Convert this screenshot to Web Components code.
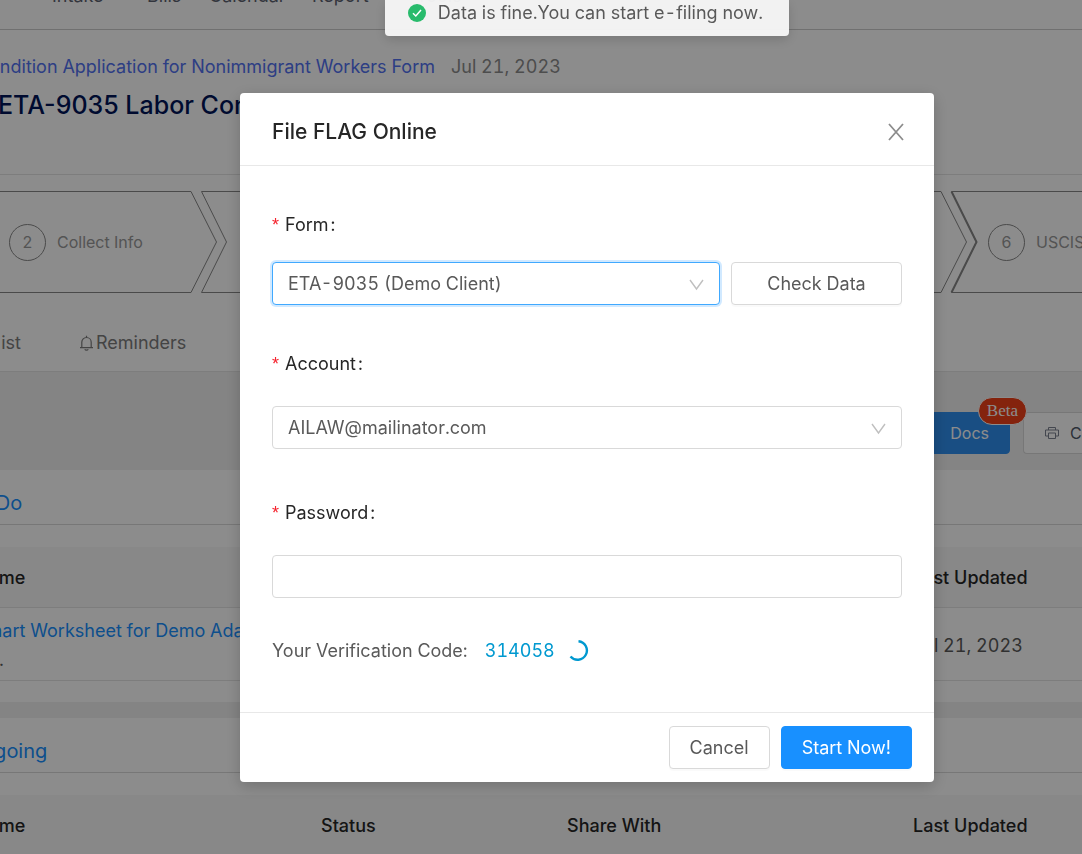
<!DOCTYPE html>
<html lang="en">
<head>
<meta charset="utf-8">
<meta name="viewport" content="width=device-width, initial-scale=1">
<title>File FLAG Online</title>
<style>
  body {
    margin: 0;
    overflow: hidden;
    background: #fff;
    color: #595959;
    font: 18px/28px Inter, "Liberation Sans", sans-serif;
    font-variant-numeric: tabular-nums;
  }
</style>
</head>
<body>
<case-page>
  <case-nav></case-nav>
  <case-header></case-header>
  <case-steps>
    <case-step number="2" style="--inset: 57px">Collect Info</case-step>
    <case-step></case-step>
    <case-step></case-step>
    <case-step></case-step>
    <case-step number="6" current style="--inset: 36px">USCIS</case-step>
  </case-steps>
  <case-tabs></case-tabs>
  <case-actions></case-actions>
  <task-card heading="To Do" filled></task-card>
  <task-card heading="Ongoing"></task-card>
</case-page>
<modal-dialog heading="File FLAG Online">
  <form-field label="Form" type="select" value="ETA-9035 (Demo Client)" active>
    <app-button wide>Check Data</app-button>
  </form-field>
  <form-field label="Account" type="select" value="AILAW@mailinator.com"></form-field>
  <form-field label="Password" type="password"></form-field>
  <verification-code code="314058">Your Verification Code:</verification-code>
  <app-button slot="footer">Cancel</app-button>
  <app-button slot="footer" primary>Start Now!</app-button>
</modal-dialog>
<toast-message>Data is fine.You can start e-filing now.</toast-message>

<script>
const define = (name, markup, setup) => {
    const template = document.createElement('template');
    template.innerHTML = markup;
    customElements.define(name, class extends HTMLElement {
        constructor() {
            super();
            this.attachShadow({ mode: 'open' });
        }

        connectedCallback() {
            if (this.shadowRoot.childElementCount) {
                return;
            }
            this.shadowRoot.appendChild(template.content.cloneNode(true));
            if (setup) {
                setup(this, this.shadowRoot);
            }
        }
    });
};

define('case-page', `
<style>
  :host {
    display: block;
    height: 100vh;
    overflow: hidden;
  }
</style>
<slot></slot>`);

define('case-nav', `
<style>
  :host {
    display: block;
    height: 29px;
    overflow: hidden;
    border-bottom: 1px solid #ccc;
  }
  nav {
    display: grid;
    grid-template-columns: 95px 62px 103px 104px auto;
    margin-top: -18px;
    padding-left: 52px;
  }
  a {
    color: #5c6270;
    text-decoration: none;
  }
</style>
<nav>
  <a href="#">Intake</a>
  <a href="#">Bills</a>
  <a href="#">Calendar</a>
  <a href="#">Report</a>
  <a href="#">Tools</a>
</nav>`);

define('case-header', `
<style>
  :host {
    display: block;
    height: 121px;
    padding-top: 23px;
    border-bottom: 1px solid #e4e4e4;
  }
  .crumbs {
    display: flex;
    gap: 16px;
    color: #8c8c8c;
  }
  .trail {
    display: flex;
    flex: none;
    justify-content: flex-end;
    width: 435px;
    overflow: hidden;
    white-space: nowrap;
  }
  a {
    color: #5271f0;
    text-decoration: none;
  }
  h1 {
    margin: 8px 0 0 -2px;
    color: #001458;
    font-size: 25px;
    font-weight: 500;
    font-variant-numeric: normal;
    line-height: 32px;
    white-space: nowrap;
  }
</style>
<div class="crumbs">
  <div class="trail"><a href="#">ndition Application for Nonimmigrant Workers Form</a></div>
  <span>Jul 21, 2023</span>
</div>
<h1>ETA-9035 Labor Condition</h1>`);

define('case-steps', `
<style>
  :host {
    display: flex;
    margin: 16px 0 0 -48px;
  }
</style>
<slot></slot>`);

define('case-step', `
<style>
  :host {
    position: relative;
    display: flex;
    flex: none;
    align-items: center;
    gap: 11px;
    box-sizing: border-box;
    width: 250px;
    height: 102px;
    padding-left: var(--inset);
    color: #999;
    font-size: 16px;
  }
  svg {
    position: absolute;
    top: 0;
    left: 0;
    overflow: visible;
    fill: none;
    stroke: #888;
  }
  .notch {
    display: none;
  }
  :host([current]) .notch {
    display: inline;
  }
  .number {
    display: flex;
    align-items: center;
    justify-content: center;
    width: 35px;
    height: 35px;
    border: 1px solid #888;
    border-radius: 50%;
  }
</style>
<svg width="266" height="102" aria-hidden="true">
  <path d="M-.5 .5H239L264.500 51L239 101.500H-.5L24.500 51Z"/>
  <path class="notch" stroke-width="2" d="M-.5 .5L24.500 51L-.5 101.500"/>
</svg>
<span class="number"></span>
<slot></slot>`, (host, root) => {
    const number = root.querySelector('.number');
    if (host.hasAttribute('number')) {
        number.textContent = host.getAttribute('number');
    } else {
        number.remove();
    }
});

define('case-tabs', `
<style>
  :host {
    display: flex;
    gap: 58px;
    margin-top: 36px;
    padding-bottom: 14px;
    border-bottom: 1px solid #e4e4e4;
  }
  a {
    display: flex;
    align-items: center;
    color: #7c7c7c;
    text-decoration: none;
  }
  .first {
    justify-content: flex-end;
    width: 21px;
    overflow: hidden;
  }
  svg {
    margin-right: 2px;
    fill: none;
    stroke: currentColor;
  }
</style>
<a class="first" href="#">ist</a>
<a href="#">
  <svg width="15" height="16" viewBox="0 0 15 16" stroke-width="1.2" aria-hidden="true">
    <path d="M1 12.7H14M2.8 12.5V7.2a4.7 4.7 0 0 1 9.4 0V12.5M7.5 2.5V.8M5.8 14.2a1.8 1.4 0 0 0 3.4 0"/>
  </svg>Reminders
</a>`);

define('case-actions', `
<style>
  :host {
    display: flex;
    justify-content: flex-end;
    gap: 13px;
    padding: 40px 0 16px;
    overflow: hidden;
    background: #f0f0f0;
  }
  .docs {
    position: relative;
  }
  button {
    display: flex;
    align-items: center;
    height: 42px;
    box-sizing: border-box;
    padding: 0 20px;
    border: 1px solid #d9d9d9;
    border-radius: 4px;
    background: #fff;
    color: #505868;
    font: inherit;
    font-size: 16px;
  }
  .primary {
    width: 160px;
    justify-content: flex-end;
    border-color: #2f8fef;
    background: #2f8fef;
    color: #fff;
  }
  .print {
    width: 59px;
    gap: 11px;
    padding: 0 0 0 21px;
    border-right: 0;
    border-radius: 4px 0 0 4px;
    overflow: hidden;
  }
  svg {
    flex: none;
    fill: none;
    stroke: #7c8290;
  }
  .beta {
    position: absolute;
    top: -15px;
    right: -17px;
    padding: 0 8px;
    border: 1px solid #fff;
    border-radius: 14px;
    background: #f04018;
    color: #fff;
    font: 17px/26px "Liberation Serif", serif;
  }
</style>
<div class="docs">
  <button class="primary">Docs</button>
  <span class="beta">Beta</span>
</div>
<button class="print">
  <svg width="14" height="14" viewBox="0 0 14 14" aria-hidden="true">
    <path d="M3.5 4V1.500H10.500V4M3.500 10H.5V4H13.500V10H10.500M3.500 7H10.500V12.500H3.500Z"/>
  </svg>C
</button>`);

define('task-card', `
<style>
  :host {
    display: block;
    margin-left: -49px;
    border-bottom: 16px solid #f0f0f0;
    padding-bottom: 21px;
  }
  h2 {
    margin: 0 0 22px;
    padding: 19px 16px 7px;
    border-bottom: 1px solid #d9d9d9;
    color: #1890ff;
    font-size: 20px;
    font-weight: 400;
  }
  table {
    width: 100%;
    border-collapse: collapse;
    table-layout: fixed;
  }
  th, td {
    padding: 9px 24px 5px;
    border-bottom: 1px solid #e4e4e4;
    text-align: left;
    white-space: nowrap;
  }
  th {
    padding: 17px 24px 15px;
    background: #f8f8f8;
    color: #262626;
    font-weight: 500;
  }
  .name { width: 298px; }
  .status { width: 198px; }
  .share { width: 298px; }
  a {
    color: #1890ff;
    text-decoration: none;
  }
  small {
    display: block;
    font-size: 18px;
    line-height: 30px;
  }
</style>
<h2></h2>
<table>
  <thead>
    <tr>
      <th class="name">Name</th>
      <th class="status">Status</th>
      <th class="share">Share With</th>
      <th>Last Updated</th>
    </tr>
  </thead>
  <tbody>
    <tr>
      <td><a href="#">Smart Worksheet for Demo Adam</a><small>Co.</small></td>
      <td></td>
      <td></td>
      <td>Jul 21, 2023</td>
    </tr>
  </tbody>
</table>`, (host, root) => {
    root.querySelector('h2').textContent = host.getAttribute('heading');
    if (!host.hasAttribute('filled')) {
        root.querySelector('tbody').remove();
    }
});

define('modal-dialog', `
<style>
  :host {
    position: fixed;
    inset: 0;
    box-sizing: border-box;
    padding: 93px 148px 24px 240px;
    background: rgba(0, 0, 0, .45);
  }
  section {
    border-radius: 4px;
    background: #fff;
    box-shadow: 0 4px 16px rgba(0, 0, 0, .2);
  }
  header {
    display: flex;
    align-items: center;
    justify-content: space-between;
    box-sizing: border-box;
    height: 73px;
    padding: 5px 29px 0 32px;
    border-bottom: 1px solid #e8e8e8;
  }
  h2 {
    margin: 0;
    color: #262626;
    font-size: 21px;
    font-weight: 500;
  }
  .close {
    display: flex;
    padding: 0;
    border: 0;
    background: none;
    color: #8c8c8c;
  }
  .body {
    padding: 39px 32px 41px;
  }
  footer {
    display: flex;
    justify-content: flex-end;
    gap: 11px;
    padding: 13px 22px;
    border-top: 1px solid #e8e8e8;
  }
</style>
<section role="dialog" aria-labelledby="heading">
  <header>
    <h2 id="heading"></h2>
    <button class="close" aria-label="Close">
      <svg width="18" height="18" viewBox="0 0 18 18" fill="none" stroke="currentColor" stroke-width="1.8">
        <path d="M2 1L16 17M16 1L2 17"/>
      </svg>
    </button>
  </header>
  <div class="body"><slot></slot></div>
  <footer><slot name="footer"></slot></footer>
</section>`, (host, root) => {
    root.querySelector('h2').textContent = host.getAttribute('heading');
});

define('form-field', `
<style>
  :host {
    display: block;
    margin-bottom: 44px;
  }
  :host([active]) {
    margin-bottom: 39px;
  }
  label {
    display: flex;
    align-items: center;
    height: 40px;
    margin-bottom: 22px;
    color: #262626;
  }
  :host([active]) label {
    margin-bottom: 17px;
  }
  label::before {
    content: "*";
    margin-right: 6px;
    color: #f5222d;
    font: 18px/18px "Liberation Sans", sans-serif;
  }
  label::after {
    content: ":";
    margin-left: 2px;
  }
  .row {
    display: flex;
    gap: 11px;
  }
  .control {
    position: relative;
    flex: 1;
  }
  select, input {
    display: block;
    box-sizing: border-box;
    width: 100%;
    height: 43px;
    padding: 0 15px;
    border: 1px solid #d9d9d9;
    border-radius: 4px;
    outline: 0;
    appearance: none;
    background: #fff;
    color: #595959;
    font: inherit;
  }
  :host([active]) select {
    border-color: #40a9ff;
    box-shadow: 0 0 0 2px rgba(24, 144, 255, .2);
  }
  svg {
    position: absolute;
    top: 17px;
    right: 16px;
    pointer-events: none;
  }
</style>
<label for="control"></label>
<div class="row">
  <div class="control"></div>
  <slot></slot>
</div>`, (host, root) => {
    const control = root.querySelector('.control');
    root.querySelector('label').textContent = host.getAttribute('label');
    if (host.getAttribute('type') === 'select') {
        control.innerHTML = `
            <select id="control"><option></option></select>
            <svg width="15" height="12" viewBox="0 0 15 12" fill="none" stroke="#bfbfbf" stroke-width="1.4" aria-hidden="true">
              <path d="M1 1L7.500 10L14 1"/>
            </svg>`;
        root.querySelector('option').textContent = host.getAttribute('value');
    } else {
        control.innerHTML = `<input id="control" type="${host.getAttribute('type')}">`;
    }
});

define('app-button', `
<style>
  :host {
    display: block;
  }
  button {
    box-sizing: border-box;
    width: 100%;
    height: 43px;
    padding: 0 20px;
    border: 1px solid #d9d9d9;
    border-radius: 4px;
    background: #fff;
    box-shadow: 0 2px 0 rgba(0, 0, 0, .02);
    color: #595959;
    font: inherit;
    white-space: nowrap;
  }
  :host([wide]) {
    flex: none;
    width: 171px;
  }
  :host([primary]) button {
    border-color: #1890ff;
    background: #1890ff;
    color: #fff;
  }
</style>
<button><slot></slot></button>`);

define('verification-code', `
<style>
  :host {
    display: flex;
    align-items: center;
    height: 40px;
    margin-top: -11px;
  }
  output {
    margin: 0 14px 0 17px;
    color: #0099d0;
  }
</style>
<slot></slot>
<output></output>
<svg width="20" height="22" viewBox="0 0 20 22" fill="none" stroke="#0099d0" stroke-width="2.400" aria-hidden="true">
  <path d="M9.500 1.200A9.300 9.300 0 1 1 1.500 16.500"/>
</svg>`, (host, root) => {
    root.querySelector('output').textContent = host.getAttribute('code');
});

define('toast-message', `
<style>
  :host {
    position: fixed;
    inset: 0 148px auto 240px;
    display: flex;
    justify-content: center;
  }
  div {
    display: flex;
    align-items: center;
    gap: 12px;
    padding: 0 26px 10px 23px;
    border-radius: 0 0 4px 4px;
    background: rgba(246, 246, 246, .96);
    box-shadow: 0 4px 12px rgba(0, 0, 0, .15);
    line-height: 26px;
    white-space: nowrap;
  }
</style>
<div role="status">
  <svg width="18" height="18" viewBox="0 0 18 18" fill="none" aria-hidden="true">
    <circle cx="9" cy="9" r="9" fill="#28bb6c"/>
    <path d="M5 9.300L7.800 12L13 6" stroke="#fff" stroke-width="1.500"/>
  </svg>
  <span><slot></slot></span>
</div>`);
</script>
</body>
</html>
